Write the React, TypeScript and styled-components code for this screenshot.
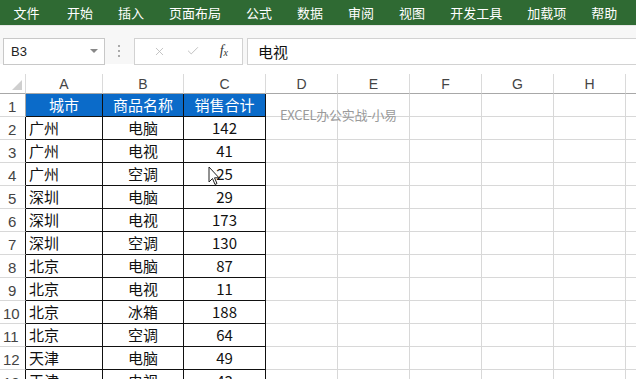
import React from 'react'
import styled, { createGlobalStyle, css } from 'styled-components'
import { X, Check } from 'lucide-react'

const GlobalStyle = createGlobalStyle`
  body {
    margin: 0;
    background: #fff;
    font-family: "Noto Sans CJK SC", "Liberation Sans", sans-serif;
  }
`

const Page = styled.div`
  position: relative;
  width: 636px;
  height: 379px;
  overflow: hidden;
  background: #fff;
`

const TabBar = styled.div`
  display: flex;
  align-items: center;
  height: 25px;
  padding-left: 1px;
  background: #2f6a33;
`

const Tab = styled.div<{ wide?: boolean }>`
  padding: 0 ${p => (p.wide ? 15 : 12.5)}px 0 12.5px;
  color: #fff;
  font-size: 13px;
  line-height: 25px;
  white-space: nowrap;
`

const FormulaArea = styled.div`
  display: flex;
  align-items: center;
  height: 38px;
  padding: 12px 0 0 3px;
  box-sizing: border-box;
  background: #f7f7f7;
  border-top: 1px solid #e6e6e6;
  margin-bottom: 10px;
  height: 39px;
`

const NameBox = styled.div`
  display: flex;
  align-items: center;
  justify-content: space-between;
  width: 102px;
  height: 27px;
  box-sizing: border-box;
  padding: 0 6px 0 7px;
  background: #fff;
  border: 1px solid #c8c8c8;
  font-family: "Liberation Sans", sans-serif;
  font-size: 13px;
  color: #222;
`

const DropArrow = styled.span`
  width: 0;
  height: 0;
  border-left: 4px solid transparent;
  border-right: 4px solid transparent;
  border-top: 4px solid #888;
`

const Grip = styled.div`
  display: flex;
  flex-direction: column;
  gap: 3px;
  margin: 0 14px 0 13px;
  span {
    width: 2px;
    height: 2px;
    background: #aaa;
  }
`

const FxBox = styled.div`
  display: flex;
  align-items: center;
  justify-content: space-around;
  width: 109px;
  height: 27px;
  box-sizing: border-box;
  padding: 0 4px 0 8px;
  background: #fff;
  border: 1px solid #d2d2d2;
  color: #b8b8b8;
`

const FxLabel = styled.span`
  font-family: "Liberation Serif", serif;
  font-style: italic;
  font-size: 14px;
  color: #333;
  sub {
    font-size: 10px;
    vertical-align: -1px;
  }
`

const FormulaInput = styled.div`
  flex: 1;
  height: 27px;
  margin-left: 4px;
  padding-left: 10px;
  box-sizing: border-box;
  background: #fff;
  border: 1px solid #d2d2d2;
  border-right: none;
  font-size: 15px;
  line-height: 25px;
  color: #111;
`

const cols = [26, 77, 81, 82, 72, 72, 72, 72, 72, 72]

const Sheet = styled.div`
  display: grid;
  grid-template-columns: ${cols.map(c => `${c}px`).join(' ')};
  grid-template-rows: 20px repeat(13, 23px);
`

const ColHead = styled.div<{ corner?: boolean }>`
  position: relative;
  box-sizing: border-box;
  border-right: 1px solid #dadada;
  border-bottom: 1px solid #a8a8a8;
  font-family: "Liberation Sans", sans-serif;
  font-size: 14px;
  line-height: 20px;
  text-align: center;
  color: #444;
  ${p =>
    p.corner &&
    css`
      &::after {
        content: '';
        position: absolute;
        right: 3px;
        bottom: 3px;
        border-left: 10px solid transparent;
        border-bottom: 10px solid #cfcfcf;
      }
    `}
`

const RowHead = styled.div<{ dark?: boolean }>`
  box-sizing: border-box;
  border-bottom: 1px solid #d8d8d8;
  border-right: 1px solid ${p => (p.dark ? '#111' : '#a8a8a8')};
  font-family: "Liberation Sans", sans-serif;
  font-size: 15px;
  line-height: 26px;
  padding-left: ${p => (p.children && String(p.children).length > 1 ? 3 : 8)}px;
  color: #444;
`

const Cell = styled.div<{ head?: boolean; data?: boolean; align?: 'left' | 'center' }>`
  box-sizing: border-box;
  border-right: 1px solid ${p => (p.data ? '#111' : '#d8d8d8')};
  border-bottom: 1px solid ${p => (p.data ? '#111' : '#d8d8d8')};
  padding-left: ${p => (p.align === 'left' ? 3 : 0)}px;
  text-align: ${p => p.align || 'center'};
  font-size: 15px;
  line-height: 22px;
  white-space: nowrap;
  color: ${p => (p.head ? '#fff' : '#111')};
  background: ${p => (p.head ? '#0b6bc9' : 'transparent')};
`

const Watermark = styled.div`
  position: absolute;
  left: 280px;
  top: 105px;
  font-size: 13px;
  letter-spacing: -0.3px;
  color: #9a9a9a;
  white-space: nowrap;
`

const Pointer = styled.svg`
  position: absolute;
  left: 208px;
  top: 166px;
`

const tabs = ['文件', '开始', '插入', '页面布局', '公式', '数据', '审阅', '视图', '开发工具', '加载项', '帮助']
const letters = ['A', 'B', 'C', 'D', 'E', 'F', 'G', 'H', '']

const rows: [string, string, string][] = [
  ['城市', '商品名称', '销售合计'],
  ['广州', '电脑', '142'],
  ['广州', '电视', '41'],
  ['广州', '空调', '25'],
  ['深圳', '电脑', '29'],
  ['深圳', '电视', '173'],
  ['深圳', '空调', '130'],
  ['北京', '电脑', '87'],
  ['北京', '电视', '11'],
  ['北京', '冰箱', '188'],
  ['北京', '空调', '64'],
  ['天津', '电脑', '49'],
  ['天津', '电视', '43'],
]

export default function App() {
  return (
    <Page>
      <GlobalStyle />
      <TabBar>
        {tabs.map((t, i) => (
          <Tab key={t} wide={i === 0}>
            {t}
          </Tab>
        ))}
      </TabBar>
      <FormulaArea>
        <NameBox>
          B3
          <DropArrow />
        </NameBox>
        <Grip>
          <span />
          <span />
          <span />
        </Grip>
        <FxBox>
          <X size={13} strokeWidth={1.5} />
          <Check size={14} strokeWidth={1.5} />
          <FxLabel>
            f<sub>x</sub>
          </FxLabel>
        </FxBox>
        <FormulaInput>电视</FormulaInput>
      </FormulaArea>
      <Sheet>
        <ColHead corner />
        {letters.map((l, i) => (
          <ColHead key={i}>{l}</ColHead>
        ))}
        {rows.map((r, ri) => (
          <React.Fragment key={ri}>
            <RowHead dark={ri > 0}>{ri + 1}</RowHead>
            <Cell data head={ri === 0} align={ri === 0 ? 'center' : 'left'}>
              {r[0]}
            </Cell>
            <Cell data head={ri === 0}>
              {r[1]}
            </Cell>
            <Cell data head={ri === 0}>
              {r[2]}
            </Cell>
            {[0, 1, 2, 3, 4, 5].map(k => (
              <Cell key={k} />
            ))}
          </React.Fragment>
        ))}
      </Sheet>
      <Watermark>EXCEL办公实战-小易</Watermark>
      <Pointer width="12" height="20" viewBox="0 0 12 20">
        <path d="M1 1 L1 16 L4.5 12.5 L7 18.5 L9 17.5 L6.5 11.8 L11 11.8 Z" fill="#fff" stroke="#222" strokeWidth="1" strokeLinejoin="round" />
      </Pointer>
    </Page>
  )
}
